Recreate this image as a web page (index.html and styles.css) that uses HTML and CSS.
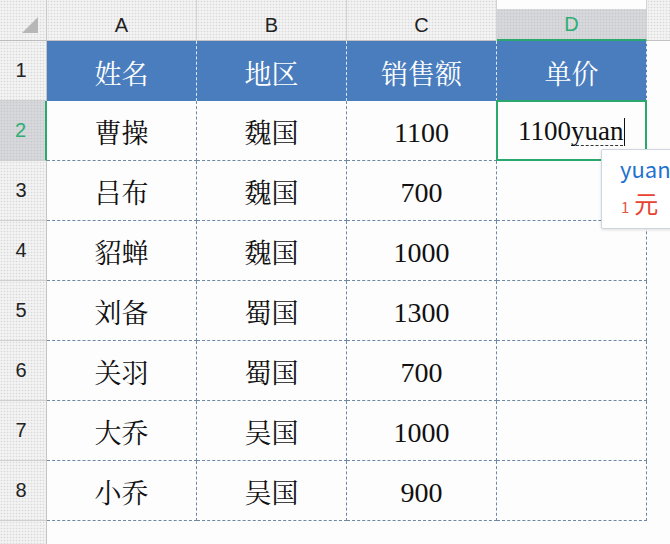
FILE: index.html
```html
<!DOCTYPE html>
<html lang="zh-CN">
<head>
<meta charset="utf-8">
<title>Sheet</title>
<link rel="stylesheet" href="styles.css">
</head>
<body>
<div class="sheet">
  <div class="corner"><svg width="16" height="16" viewBox="0 0 16 16"><polygon points="16,0 16,16 0,16" fill="#b7b7b7"/></svg></div>
  <div class="colhead">A</div>
  <div class="colhead">B</div>
  <div class="colhead">C</div>
  <div class="colhead active">D</div>
  <div class="colhead rest"></div>

  <div class="rowhead">1</div>
  <div class="c th">姓名</div>
  <div class="c th">地区</div>
  <div class="c th">销售额</div>
  <div class="c th">单价</div>
  <div class="rest-body"></div>

  <div class="rowhead active">2</div>
  <div class="c">曹操</div>
  <div class="c">魏国</div>
  <div class="c num">1100</div>
  <div class="c editing"><span class="edit num">1100<span class="comp">yuan</span><span class="caret"></span></span></div>
  <div class="rest-body"></div>

  <div class="rowhead">3</div>
  <div class="c">吕布</div>
  <div class="c">魏国</div>
  <div class="c num">700</div>
  <div class="c"></div>
  <div class="rest-body"></div>

  <div class="rowhead">4</div>
  <div class="c">貂蝉</div>
  <div class="c">魏国</div>
  <div class="c num">1000</div>
  <div class="c"></div>
  <div class="rest-body"></div>

  <div class="rowhead">5</div>
  <div class="c">刘备</div>
  <div class="c">蜀国</div>
  <div class="c num">1300</div>
  <div class="c"></div>
  <div class="rest-body"></div>

  <div class="rowhead">6</div>
  <div class="c">关羽</div>
  <div class="c">蜀国</div>
  <div class="c num">700</div>
  <div class="c"></div>
  <div class="rest-body"></div>

  <div class="rowhead">7</div>
  <div class="c">大乔</div>
  <div class="c">吴国</div>
  <div class="c num">1000</div>
  <div class="c"></div>
  <div class="rest-body"></div>

  <div class="rowhead">8</div>
  <div class="c">小乔</div>
  <div class="c">吴国</div>
  <div class="c num">900</div>
  <div class="c"></div>
  <div class="rest-body"></div>

  <div class="rowhead empty"></div>
  <div class="below"></div>
</div>

<div class="ime">
  <div class="ime-py">yuan</div>
  <div class="ime-cand"><span class="ime-idx">1</span><span class="ime-word">元</span></div>
</div>
</body>
</html>
```

FILE: styles.css
```css
html, body {
  margin: 0;
  padding: 0;
}
body {
  width: 670px;
  height: 544px;
  overflow: hidden;
  position: relative;
  background: #fdfdfd;
  font-family: "Liberation Serif", "Noto Serif CJK SC", "Noto Sans CJK SC", serif;
}
.sheet {
  display: grid;
  grid-template-columns: 47px repeat(4, 150px) 1fr;
  grid-template-rows: 41px repeat(8, 60px) 1fr;
  width: 670px;
  height: 544px;
}
.corner, .colhead, .rowhead {
  background-color: #f3f3f3;
  background-image: radial-gradient(circle, #d9d9d9 0.7px, transparent 1.1px);
  background-size: 3px 3px;
  font-family: "Liberation Sans", "Noto Sans", sans-serif;
  color: #222;
}
.corner {
  border-right: 1px solid #c9c9c9;
  border-bottom: 1px solid #bdbdbd;
  box-sizing: border-box;
  display: flex;
  align-items: flex-end;
  justify-content: flex-end;
  padding: 0 8px 7px 0;
}
.corner svg {
  display: block;
}
.colhead {
  box-sizing: border-box;
  border-right: 1px solid #d2d2d2;
  border-bottom: 1px solid #c3c3c3;
  padding-top: 10px;
  display: flex;
  align-items: center;
  justify-content: center;
  font-size: 20px;
}
.colhead.active {
  background-color: #d6d8db;
  background-image: radial-gradient(circle, #c6c8cb 0.7px, transparent 1.1px);
  background-clip: content-box;
  padding-top: 9px;
  color: #2fae73;
  border-bottom: 2px solid #2ba86e;
  border-right-color: #d2d2d2;
}
.colhead.rest {
  border-right: none;
}
.rowhead {
  box-sizing: border-box;
  border-right: 1px solid #c4c4c4;
  border-bottom: 1px solid #cfcfcf;
  display: flex;
  align-items: center;
  justify-content: center;
  font-size: 20px;
  padding-right: 4px;
}
.rowhead.active {
  background-color: #d6d8db;
  background-image: radial-gradient(circle, #c6c8cb 0.7px, transparent 1.1px);
  color: #2fae73;
  border-right: 2px solid #2ba86e;
}
.rowhead.empty {
  border-bottom: none;
}
.c {
  box-sizing: border-box;
  border-right: 1px dashed #6f87a6;
  border-bottom: 1px dashed #6f87a6;
  display: flex;
  align-items: center;
  justify-content: center;
  font-size: 27px;
  color: #111;
  background: #fdfdfd;
  padding-top: 2px;
}
.c.th {
  background: #4a7dbd;
  color: #ffffff;
  border-right: 1px dashed #dfe8f3;
  border-bottom: none;
}
.c.num {
  font-size: 28px;
  padding-top: 5px;
}
.rest-body {
  background: #fdfdfd;
}
.below {
  grid-column: 2 / -1;
  background: #fdfdfd;
}
.c.editing {
  position: relative;
  justify-content: flex-start;
  padding-left: 21px;
}
.c.editing::after {
  content: "";
  position: absolute;
  left: -1px;
  top: -1px;
  right: -1px;
  bottom: -1px;
  border: 2px solid #2ba86e;
}
.edit {
  position: relative;
  display: inline-flex;
  align-items: center;
  white-space: nowrap;
}
.comp {
  border-bottom: 1px dashed #333;
  line-height: 27px;
}
.caret {
  display: inline-block;
  width: 1px;
  height: 28px;
  background: #111;
  margin-left: 1px;
}
.ime {
  position: absolute;
  left: 601px;
  top: 149px;
  width: 90px;
  height: 80px;
  box-sizing: border-box;
  background: #ffffff;
  border: 1px solid #cdd5df;
  border-radius: 2px;
  box-shadow: 0 1px 3px rgba(0, 0, 0, 0.12);
  font-family: "Noto Sans CJK SC", "Noto Sans", sans-serif;
  padding: 3px 0 0 18px;
}
.ime-py {
  color: #1f72d0;
  font-size: 22px;
  line-height: 30px;
}
.ime-cand {
  display: flex;
  align-items: baseline;
  margin-top: 5px;
}
.ime-idx {
  color: #e8553f;
  font-size: 15px;
  margin-right: 5px;
  margin-left: 1px;
}
.ime-word {
  color: #e8412f;
  font-size: 24px;
  line-height: 30px;
}
```
